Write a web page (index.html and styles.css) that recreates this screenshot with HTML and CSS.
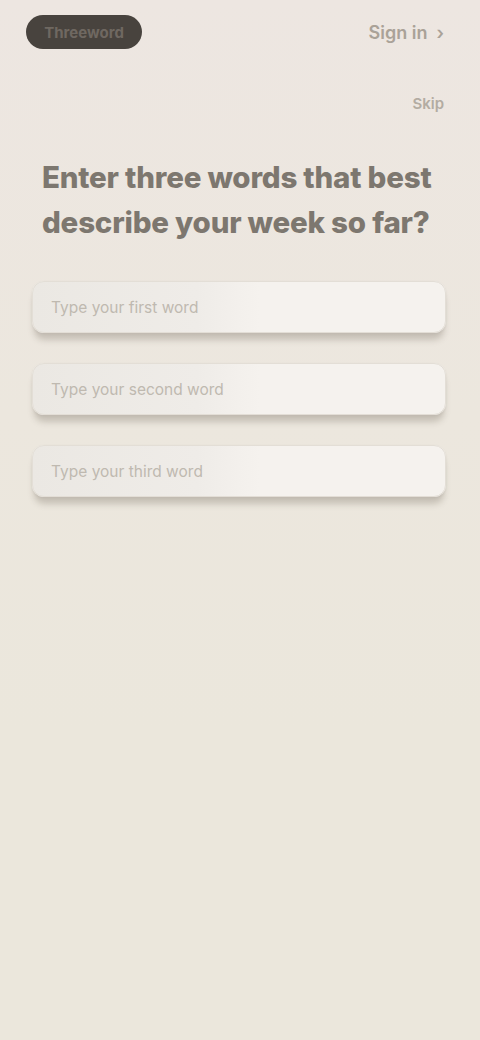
FILE: index.html
```html
<!DOCTYPE html>
<html lang="en">
<head>
<meta charset="utf-8">
<title>Three words</title>
<link rel="stylesheet" href="styles.css">
</head>
<body>
<div class="screen">
  <header class="topbar">
    <button class="pill">Threeword</button>
    <a class="signin">Sign in&nbsp;&nbsp;›</a>
  </header>
  <div class="skiprow"><a class="skip">Skip</a></div>
  <h1 class="title">Enter three words that best describe your week so far?</h1>
  <form class="fields">
    <div class="field"><input class="input" placeholder="Type your first word"></div>
    <div class="field"><input class="input" placeholder="Type your second word"></div>
    <div class="field"><input class="input" placeholder="Type your third word"></div>
  </form>
</div>
</body>
</html>
```
FILE: styles.css
```css
* { box-sizing: border-box; }
html, body { margin: 0; padding: 0; }
body {
  font-family: Inter, "Liberation Sans", sans-serif;
  background: linear-gradient(180deg, #ede6e1 0%, #ece7de 40%, #ebe7dc 70%, #ebe7dc 100%);
  min-height: 1040px;
  color: #35312c;
}
.screen {
  display: flex;
  flex-direction: column;
  padding: 14px 34px 0 26px;
}
.topbar {
  display: flex;
  justify-content: space-between;
  align-items: center;
  height: 36px;
}
.pill {
  width: 116px;
  height: 34px;
  border-radius: 17px;
  border: none;
  background: #48433e;
  color: #6f6861;
  font-family: inherit;
  font-size: 15px;
  font-weight: 700;
}
.signin {
  font-size: 18px;
  font-weight: 600;
  color: #aaa298;
  margin-right: 2px;
}
.skiprow {
  display: flex;
  justify-content: flex-end;
  margin-top: 44px;
}
.skip {
  font-size: 15px;
  font-weight: 600;
  color: #b3aca2;
  margin-right: 2px;
}
.title {
  margin: 42px 0 0 16px;
  font-size: 29.5px;
  line-height: 45px;
  font-weight: 800;
  color: #7d776f;
  letter-spacing: -0.2px;
}
.fields {
  display: flex;
  flex-direction: column;
  gap: 30px;
  margin-top: 36px;
  padding-left: 6px;
}
.field {
  border-radius: 12px;
  background: #f2efea;
  box-shadow: 0 9px 6px -2px rgba(120, 112, 100, 0.32), 0 1px 3px rgba(0,0,0,0.06);
}
.input {
  width: 100%;
  height: 52px;
  border: 1px solid #e3ded6;
  border-radius: 12px;
  background: linear-gradient(90deg, #ebe8e3 0%, #efece8 40%, #f5f2ee 55%, #f5f2ee 100%);
  padding: 0 18px;
  font-family: inherit;
  font-size: 15.5px;
  color: #35312c;
  outline: none;
}
.input::placeholder { color: #bfb9b0; }
```
